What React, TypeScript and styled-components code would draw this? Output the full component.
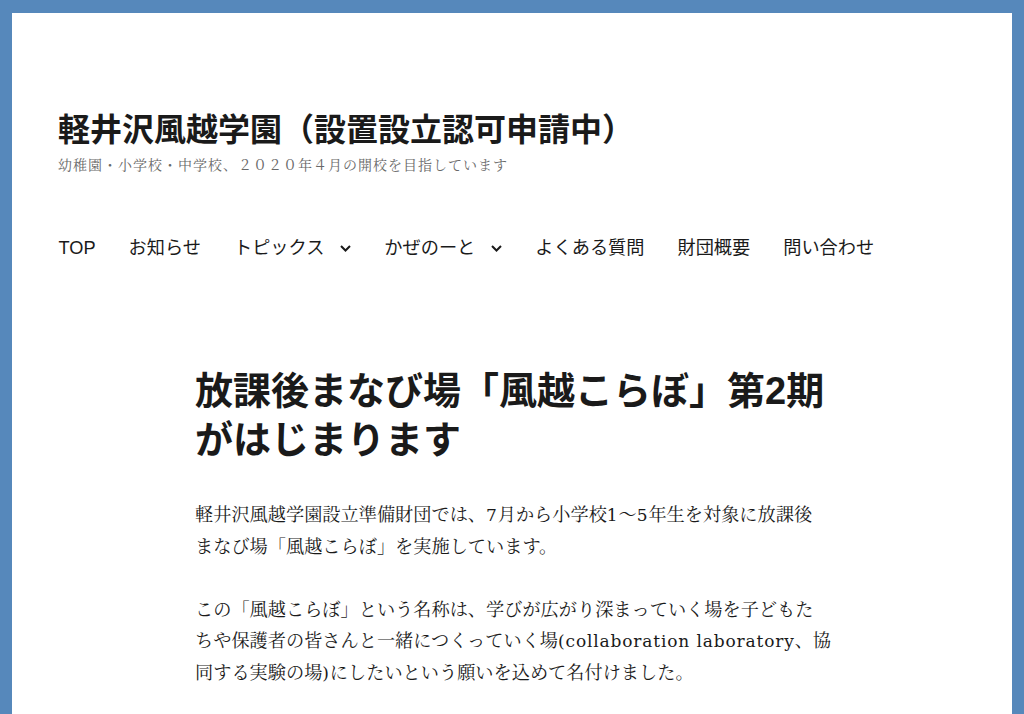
import React from "react";
import styled, { createGlobalStyle } from "styled-components";

const GlobalStyle = createGlobalStyle`
  html, body {
    margin: 0;
    padding: 0;
    background: #5688bb;
  }
  body {
    font-family: "Liberation Sans", "Noto Sans CJK JP", sans-serif;
    color: #1a1a1a;
  }
`;

const Site = styled.div`
  margin: 13px 12px 0;
  min-height: calc(100vh - 13px);
  background: #ffffff;
`;

const Header = styled.header`
  padding: 97px 46px 0;
`;

const SiteTitle = styled.h1`
  margin: 0;
  font-family: "Liberation Sans", "Noto Sans CJK JP", sans-serif;
  font-size: 32px;
  line-height: 40px;
  font-weight: 700;
  color: #1a1a1a;
`;

const Tagline = styled.p`
  margin: 6px 0 0;
  font-family: "Liberation Serif", "Noto Serif CJK JP", "Noto Sans CJK JP", serif;
  font-size: 14px;
  line-height: 20px;
  letter-spacing: 1px;
  color: #686868;
`;

const Menu = styled.ul`
  display: flex;
  align-items: center;
  list-style: none;
  margin: 60px 0 0 -16px;
  padding: 0;
`;

const MenuItem = styled.li`
  display: flex;
  align-items: center;
  padding: 0 16.5px;
  font-size: 18.2px;
  line-height: 24px;
  color: #1a1a1a;
`;

const Chevron = styled.svg`
  margin-left: 16px;
  width: 11px;
  height: 7px;
`;

const Main = styled.main`
  padding: 107px 0 0 183px;
`;

const Article = styled.article`
  width: 660px;
`;

const EntryTitle = styled.h2`
  margin: 0;
  width: 640px;
  font-family: "Liberation Sans", "Noto Sans CJK JP", sans-serif;
  font-size: 38px;
  line-height: 49px;
  font-weight: 700;
  color: #1a1a1a;
`;

const EntryContent = styled.div`
  margin-top: 35px;
  font-family: "Liberation Serif", "Noto Serif CJK JP", "Noto Sans CJK JP", serif;
  font-size: 18.2px;
  line-height: 31.5px;
  color: #1a1a1a;

  p {
    margin: 0 0 31.5px;
  }
`;

// Latin runs set in a wider serif, close to the original's body face
const Latin = styled.span`
  font-family: "DejaVu Serif", "Liberation Serif", serif;
  font-size: 17px;
  letter-spacing: 0.85px;
`;

const menu = [
  { label: "TOP" },
  { label: "お知らせ" },
  { label: "トピックス", sub: true },
  { label: "かぜのーと", sub: true },
  { label: "よくある質問" },
  { label: "財団概要" },
  { label: "問い合わせ" },
];

export default function App() {
  return (
    <>
      <GlobalStyle />
      <Site>
        <Header>
          <SiteTitle>軽井沢風越学園（設置設立認可申請中）</SiteTitle>
          <Tagline>幼稚園・小学校・中学校、２０２０年４月の開校を目指しています</Tagline>
          <nav>
            <Menu>
              {menu.map((m) => (
                <MenuItem key={m.label}>
                  {m.label}
                  {m.sub && (
                    <Chevron viewBox="0 0 11 7">
                      <polyline
                        points="1,1 5.5,5.5 10,1"
                        fill="none"
                        stroke="#1a1a1a"
                        strokeWidth="2"
                      />
                    </Chevron>
                  )}
                </MenuItem>
              ))}
            </Menu>
          </nav>
        </Header>
        <Main>
          <Article>
            <EntryTitle>放課後まなび場「風越こらぼ」第2期がはじまります</EntryTitle>
            <EntryContent>
              <p>
                軽井沢風越学園設立準備財団では、<Latin>7</Latin>月から小学校<Latin>1</Latin>〜<Latin>5</Latin>年生を対象に放課後
                <br />
                まなび場「風越こらぼ」を実施しています。
              </p>
              <p>
                この「風越こらぼ」という名称は、学びが広がり深まっていく場を子どもた
                <br />
                ちや保護者の皆さんと一緒につくっていく場<Latin>(collaboration laboratory</Latin>、協
                <br />
                同する実験の場<Latin>)</Latin>にしたいという願いを込めて名付けました。
              </p>
            </EntryContent>
          </Article>
        </Main>
      </Site>
    </>
  );
}
